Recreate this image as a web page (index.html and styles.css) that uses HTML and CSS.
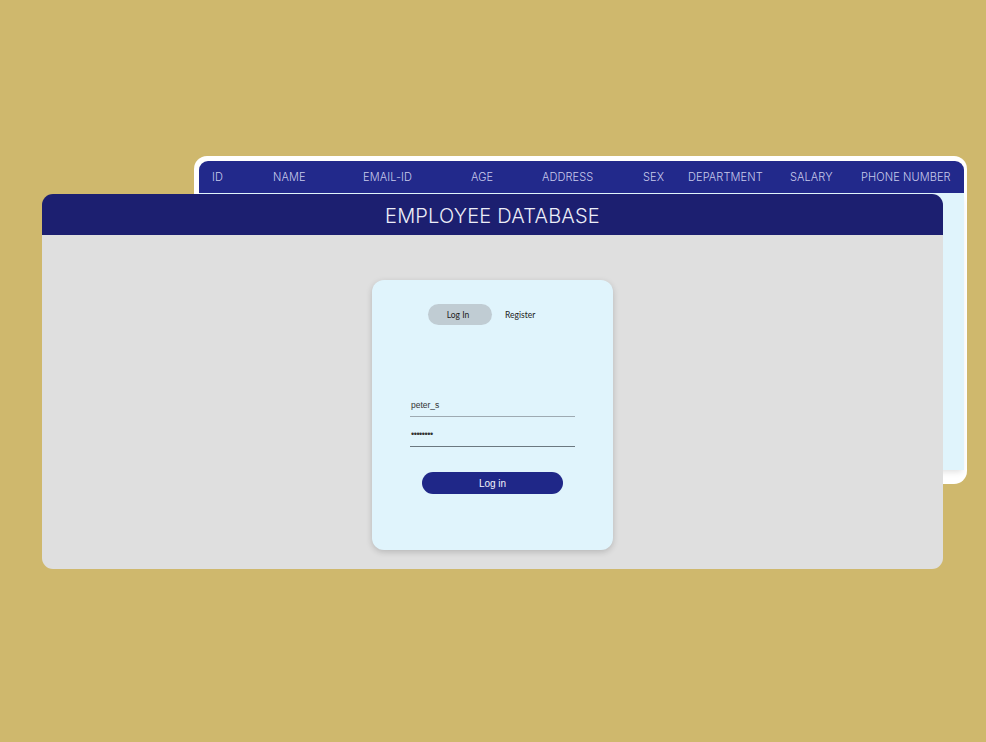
FILE: index.html
```html
<!DOCTYPE html>
<html lang="en">
<head>
<meta charset="utf-8">
<title>Employee Database</title>
<link rel="stylesheet" href="styles.css">
</head>
<body>
<div class="desktop">
  <div class="window back-window">
    <div class="table-head">
      <span>ID</span>
      <span>NAME</span>
      <span>EMAIL-ID</span>
      <span>AGE</span>
      <span>ADDRESS</span>
      <span>SEX</span>
      <span>DEPARTMENT</span>
      <span>SALARY</span>
      <span>PHONE NUMBER</span>
    </div>
    <div class="table-body"></div>
  </div>

  <div class="window front-window">
    <header class="front-header">EMPLOYEE DATABASE</header>
    <main class="front-body">
      <div class="login-card">
        <div class="tabs">
          <span class="tab active">Log In</span>
          <span class="tab">Register</span>
        </div>
        <div class="fields">
          <div class="field user">peter_s</div>
          <div class="field pass">••••••••</div>
        </div>
        <button class="login-btn">Log in</button>
      </div>
    </main>
  </div>
</div>
</body>
</html>
```

FILE: styles.css
```css
html, body {
  margin: 0;
  padding: 0;
}
body {
  width: 986px;
  height: 742px;
  background: #cfb86d;
  overflow: hidden;
  font-family: "Inter", "Liberation Sans", sans-serif;
}
.desktop {
  position: relative;
  width: 986px;
  height: 742px;
}
.window {
  position: absolute;
  box-sizing: border-box;
}
.back-window {
  left: 194px;
  top: 156px;
  width: 773px;
  height: 328px;
  background: #ffffff;
  border-radius: 13px;
  padding: 5px 3px 14px 5px;
  display: flex;
  flex-direction: column;
}
.table-head {
  height: 32px;
  background: #22298b;
  border-radius: 9px 9px 0 0;
  display: grid;
  grid-template-columns: 61px 90px 108px 71px 101px 45px 102px 71px 1fr;
  align-items: center;
  padding-left: 13px;
  color: #c9cbec;
  font-size: 11px;
  font-weight: 300;
  letter-spacing: 0.1px;
  white-space: nowrap;
}
.table-body {
  flex: 1;
  background: #e0f4fc;
  box-shadow: 0 4px 6px -2px rgba(0,0,0,0.12);
}
.front-window {
  left: 42px;
  top: 194px;
  width: 901px;
  height: 375px;
  border-radius: 11px;
  overflow: hidden;
  display: flex;
  flex-direction: column;
}
.front-header {
  height: 41px;
  flex: none;
  background: #1c1f70;
  color: #eceef8;
  font-size: 20px;
  font-weight: 300;
  letter-spacing: 0.2px;
  display: flex;
  align-items: center;
  justify-content: center;
  padding-top: 2px;
  box-sizing: border-box;
}
.front-body {
  flex: 1;
  background: #dfdfdf;
  display: flex;
  justify-content: center;
  padding-top: 45px;
}
.login-card {
  width: 241px;
  height: 270px;
  box-sizing: border-box;
  background: #e0f4fc;
  border-radius: 12px;
  box-shadow: 0 2px 6px rgba(0,0,0,0.18);
  padding-top: 24px;
  display: flex;
  flex-direction: column;
}
.tabs {
  display: flex;
  padding-left: 56px;
  font-family: "Lato", "Open Sans", sans-serif;
  font-size: 8.5px;
  color: #222;
}
.tab {
  height: 21px;
  display: flex;
  align-items: center;
  justify-content: center;
}
.tab.active {
  width: 60px;
  padding-right: 4px;
  background: #c0ccd3;
  border-radius: 11px;
}
.tab:not(.active) {
  padding-left: 13px;
}
.fields {
  margin: 71px 38px 0 38px;
  font-family: "Liberation Sans", Arial, sans-serif;
  font-size: 8.5px;
  color: #333;
}
.field {
  height: 21px;
  box-sizing: border-box;
  padding-top: 4px;
  padding-left: 1px;
}
.field.user {
  border-bottom: 1.5px solid #9eaab2;
}
.field.pass {
  margin-top: 9px;
  border-bottom: 1.5px solid #6b7880;
  font-size: 9px;
  padding-top: 3px;
  letter-spacing: -0.45px;
}
.login-btn {
  margin: 25px 0 0 50px;
  width: 141px;
  height: 22px;
  border: none;
  border-radius: 11px;
  background: #1f2788;
  color: #f2f3fb;
  font-family: "Liberation Sans", Arial, sans-serif;
  font-size: 10px;
  padding: 0;
}
```
